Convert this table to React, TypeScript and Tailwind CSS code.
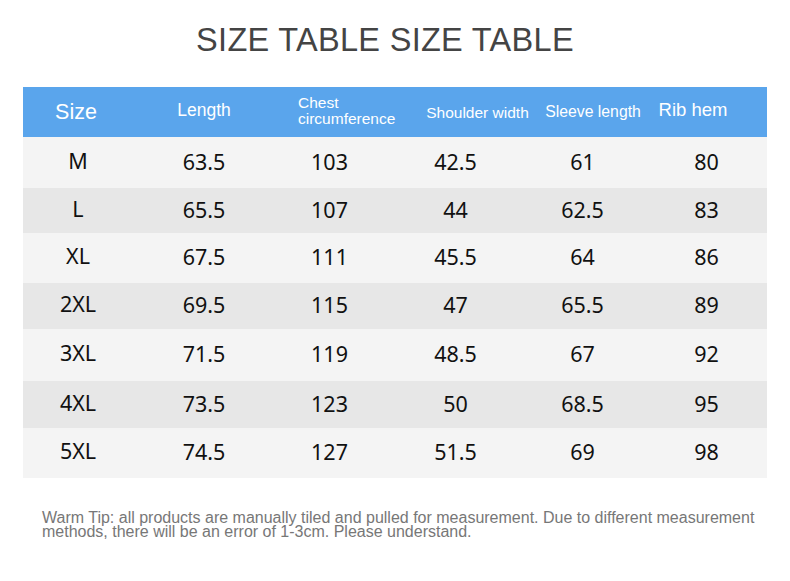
const rows = [
  { size: "M", vals: ["63.5", "103", "42.5", "61", "80"], h: "h-[51px]", bg: "bg-[#f4f4f4]" },
  { size: "L", vals: ["65.5", "107", "44", "62.5", "83"], h: "h-[45px]", bg: "bg-[#e7e7e7]" },
  { size: "XL", vals: ["67.5", "111", "45.5", "64", "86"], h: "h-[50px]", bg: "bg-[#f4f4f4]" },
  { size: "2XL", vals: ["69.5", "115", "47", "65.5", "89"], h: "h-[46px]", bg: "bg-[#e7e7e7]" },
  { size: "3XL", vals: ["71.5", "119", "48.5", "67", "92"], h: "h-[52px]", bg: "bg-[#f4f4f4]" },
  { size: "4XL", vals: ["73.5", "123", "50", "68.5", "95"], h: "h-[47px]", bg: "bg-[#e7e7e7]" },
  { size: "5XL", vals: ["74.5", "127", "51.5", "69", "98"], h: "h-[50px]", bg: "bg-[#f4f4f4]" },
];

const valueCols = ["w-[126px]", "w-[125px]", "w-[127px]", "w-[127px]", "w-[121px]"];

export default function App() {
  return (
    <div className="w-[790px] h-[581px] bg-white font-['Liberation_Sans',Arial,sans-serif] overflow-hidden">
      <h1 className="pt-[21px] pr-[20px] h-[87px] text-center text-[32.5px] leading-[38px] text-[#444] tracking-[0.3px]">
        SIZE TABLE SIZE TABLE
      </h1>

      <div className="mx-[23px] w-[744px]">
        <div className="flex h-[50px] bg-[#5aa5ec] text-white">
          <div className="w-[118px] flex items-center justify-center pr-[12px] pt-[1px] text-[21.5px]">Size</div>
          <div className="w-[126px] flex items-center justify-center pb-[4px] text-[17.5px]">Length</div>
          <div className="w-[148px] flex flex-col justify-center pl-[31px] pb-[2px] text-[15.5px] leading-[16px]">
            <span>Chest</span>
            <span>circumference</span>
          </div>
          <div className="w-[125px] flex items-center justify-center pt-[2px] text-[15.5px]">Shoulder width</div>
          <div className="w-[106px] flex items-center justify-center text-[15.8px]">Sleeve length</div>
          <div className="w-[121px] flex items-center justify-center pr-[27px] pb-[5px] text-[18.5px]">Rib hem</div>
        </div>

        {rows.map((r) => (
          <div key={r.size} className={`flex ${r.h} ${r.bg} text-[#111] font-['Noto_Sans',sans-serif] text-[21.5px]`}>
            <div className="w-[118px] flex items-center justify-center pr-[8px] pb-[3px]">{r.size}</div>
            {r.vals.map((v, i) => (
              <div key={i} className={`${valueCols[i]} flex items-center justify-center pb-[1px]`}>
                {v}
              </div>
            ))}
          </div>
        ))}
      </div>

      <p className="mt-[33px] ml-[42px] w-[740px] text-[16px] leading-[14px] text-[#777]">
        Warm Tip: all products are manually tiled and pulled for measurement. Due to different measurement
        <br />
        methods, there will be an error of 1-3cm. Please understand.
      </p>
    </div>
  );
}
